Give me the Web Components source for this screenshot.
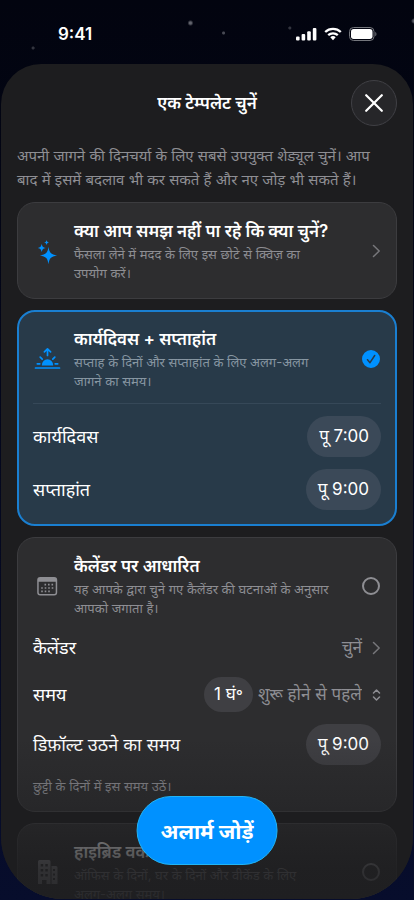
<!DOCTYPE html>
<html lang="hi">
<head>
<meta charset="utf-8">
<meta name="viewport" content="width=device-width, initial-scale=1">
<title>एक टेम्पलेट चुनें</title>
<style>
  html, body {
    margin: 0;
    height: 100%;
  }
  body {
    --blue: #0091ff;
    --sheet: #1d1d1f;
    --grey: #8e8e93;
    background: #02040f;
    color: #fff;
    font-family: Inter, "Noto Sans", "Noto Sans Devanagari", sans-serif;
  }
</style>
</head>
<body>
<alarm-app>
  <status-bar slot="status" time="9:41"></status-bar>
  <template-sheet heading="एक टेम्पलेट चुनें" action="अलार्म जोड़ें">
    <p slot="intro">अपनी जागने की दिनचर्या के लिए सबसे उपयुक्त शेड्यूल चुनें। आप बाद में इसमें बदलाव भी कर सकते हैं और नए जोड़ भी सकते हैं।</p>
    <quiz-card>
      <span slot="title">क्या आप समझ नहीं पा रहे कि क्या चुनें?</span>
      <span slot="text">फैसला लेने में मदद के लिए इस छोटे से क्विज़ का उपयोग करें।</span>
    </quiz-card>
    <template-card icon="sunrise" selected divided>
      <span slot="title">कार्यदिवस + सप्ताहांत</span>
      <span slot="text">सप्ताह के दिनों और सप्ताहांत के लिए अलग-अलग जागने का समय।</span>
      <time-row label="कार्यदिवस" value="पू 7:00"></time-row>
      <time-row label="सप्ताहांत" value="पू 9:00"></time-row>
    </template-card>
    <template-card icon="calendar">
      <span slot="title">कैलेंडर पर आधारित</span>
      <span slot="text">यह आपके द्वारा चुने गए कैलेंडर की घटनाओं के अनुसार आपको जगाता है।</span>
      <link-row label="कैलेंडर" value="चुनें"></link-row>
      <offset-row label="समय" value="1 घं॰" when="शुरू होने से पहले"></offset-row>
      <time-row label="डिफ़ॉल्ट उठने का समय" value="पू 9:00"></time-row>
      <card-note>छुट्टी के दिनों में इस समय उठें।</card-note>
    </template-card>
    <template-card icon="building">
      <span slot="title">हाइब्रिड वर्क</span>
      <span slot="text">ऑफिस के दिनों, घर के दिनों और वीकेंड के लिए अलग-अलग समय।</span>
    </template-card>
  </template-sheet>
</alarm-app>

<script>
const icons = {
  sparkles: `
    <svg width="28" height="28" viewBox="0 0 28 28" fill="#0091ff" aria-hidden="true">
      <path d="M15.500 9.800c.9 6 2.300 7.600 8.600 8.700-6.300 1.100-7.700 2.700-8.600 8.700-.9-6-2.300-7.600-8.600-8.700 6.300-1.100 7.700-2.700 8.600-8.700z"/>
      <path d="M8.700 6.700c.6 2.900 1.200 3.600 4.100 4.200-2.900.6-3.500 1.300-4.100 4.200-.6-2.900-1.200-3.600-4.100-4.200 2.900-.6 3.500-1.300 4.100-4.200z"/>
      <path d="M13.600 3c.4 1.800.8 2.200 2.600 2.600-1.800.4-2.200.8-2.600 2.600-.4-1.800-.8-2.200-2.600-2.600 1.800-.4 2.200-.8 2.600-2.600z"/>
    </svg>`,
  sunrise: `
    <svg width="28" height="28" viewBox="0 0 28 28" fill="none" stroke="#0091ff" stroke-width="1.700" stroke-linecap="round" stroke-linejoin="round" aria-hidden="true">
      <path d="M2.500 23h24M4.300 18.800h2.500M22.200 18.800h2.500M7.200 12.200l2 2M21.800 12.200l-2 2M14.500 10.500V4M11.400 6.800l3.100-3 3.100 3"/>
      <path d="M8.800 20.500a5.700 6.300 0 0 1 11.400 0z" fill="#0091ff" stroke="none"/>
    </svg>`,
  calendar: `
    <svg width="28" height="28" viewBox="0 0 28 28" fill="#8e8e93" aria-hidden="true">
      <path d="M7.200 5h14a3 3 0 0 1 3 3v12.600a3 3 0 0 1-3 3h-14a3 3 0 0 1-3-3V8a3 3 0 0 1 3-3zM5.700 9.800v10.700a1.600 1.600 0 0 0 1.600 1.600h13.800a1.600 1.600 0 0 0 1.600-1.600V9.800z" fill-rule="evenodd"/>
      <path d="M11.500 12.600h8.800M8.200 16h12.100M8.200 19.400h8.800" fill="none" stroke="#8e8e93" stroke-width="1.600" stroke-dasharray="1.600 1.900"/>
    </svg>`,
  building: `
    <svg width="28" height="28" viewBox="0 0 28 28" fill="#8e8e93" aria-hidden="true">
      <path fill-rule="evenodd" d="M6.500 2h9.500a1.500 1.500 0 0 1 1.500 1.500V26h-4v-4h-4.500v4H5V3.500A1.500 1.500 0 0 1 6.500 2zM7.700 6v2.500h2.500V6zM12.300 6v2.500h2.500V6zM7.700 11v2.500h2.500V11zM12.300 11v2.500h2.500V11zM7.700 16v2.500h2.500V16zM12.300 16v2.500h2.500V16z"/>
      <path fill-rule="evenodd" d="M18.500 8H23a1.500 1.500 0 0 1 1.500 1.500V26h-6zM20 11v2h2v-2zM20 15.500v2h2v-2zM20 20v2h2v-2z"/>
    </svg>`,
  chevron: `
    <svg class="chevron" width="9" height="14" viewBox="0 0 9 14" fill="none" stroke="#77777b" stroke-width="1.500" stroke-linecap="round" stroke-linejoin="round" aria-hidden="true">
      <path d="M1.500 1.500L7.200 7l-5.700 5.500"/>
    </svg>`
};

// styles of a card, shared by the quiz and the templates
const cardStyles = `
  :host {
    display: block;
    box-sizing: border-box;
    padding: 15px;
    border: 1px solid #3c3c3f;
    border-radius: 18px;
    background: #2d2d2f;
  }
  .head {
    display: grid;
    grid-template-columns: 28px minmax(0, 1fr) 20px;
    gap: 13px;
    align-items: center;
    cursor: pointer;
  }
  .head svg {
    display: block;
  }
  .head .chevron {
    justify-self: end;
  }
  .copy {
    padding-right: 18px;
  }
  .title, .text {
    display: block;
  }
  .title {
    font-size: 17px;
    line-height: 27px;
    font-weight: 600;
    white-space: nowrap;
  }
  .text {
    font-size: 13px;
    line-height: 19px;
    color: var(--text, #8e8e93);
  }
`;

const rowStyles = `
  :host {
    display: flex;
    align-items: center;
    justify-content: space-between;
    min-height: 35px;
    font-size: 17px;
    line-height: 25px;
  }
  label {
    font-size: 18px;
  }
  button {
    font: inherit;
    color: inherit;
    border: 0;
    cursor: pointer;
  }
  .pill {
    height: 41px;
    padding: 0 12px;
    border-radius: 21px;
    background: var(--pill, #3f3f43);
  }
`;

class BaseElement extends HTMLElement {
  constructor() {
    super();
    this.attachShadow({ mode: "open" });
  }
  connectedCallback() {
    this.shadowRoot.innerHTML = this.render();
  }
}

class AlarmApp extends BaseElement {
  render() {
    return `
      <style>
        :host {
          display: flex;
          flex-direction: column;
          height: 100vh;
          box-sizing: border-box;
          padding-bottom: 1px;
          background:
            radial-gradient(circle at 46% 23px, #62646d 1px, transparent 3px),
            radial-gradient(circle at 54% 33px, #484a54 1px, transparent 2px),
            radial-gradient(circle at 70% 28px, #33353f 1px, transparent 2px),
            radial-gradient(circle at 8% 48px, #33353f 1px, transparent 2px),
            radial-gradient(circle at 100% 21px, #555761 1px, transparent 3px),
            linear-gradient(#02040f, #03061a 40%, #070d2c);
        }
        ::slotted(template-sheet) {
          flex: 1;
          min-height: 0;
        }
      </style>
      <slot name="status"></slot>
      <slot></slot>
    `;
  }
}

class StatusBar extends BaseElement {
  render() {
    return `
      <style>
        :host {
          display: flex;
          align-items: center;
          justify-content: space-between;
          height: 64px;
          box-sizing: border-box;
          padding: 4px 37px 0 58px;
          font-size: 17px;
          font-weight: 600;
        }
        .signals {
          display: flex;
          align-items: center;
          gap: 7px;
        }
      </style>
      <span>${this.getAttribute("time")}</span>
      <div class="signals">
        <svg width="21" height="14" viewBox="0 0 21 14" fill="#fff">
          <rect x="0" y="9.500" width="3.600" height="4" rx="1.100"/>
          <rect x="5.600" y="7" width="3.600" height="6.500" rx="1.100"/>
          <rect x="11.200" y="4.200" width="3.600" height="9.300" rx="1.100"/>
          <rect x="16.800" y="1" width="3.600" height="12.500" rx="1.100"/>
        </svg>
        <svg width="18" height="14" viewBox="0 0 18 14" fill="none" stroke="#fff" stroke-width="2.300">
          <path d="M1.200 5a11.200 11.200 0 0 1 15.600 0M4.200 8.200a7 7 0 0 1 9.600 0"/>
          <path d="M6.300 10.300a4 4 0 0 1 5.400 0L9 13.200z" fill="#fff" stroke="none"/>
        </svg>
        <svg width="28" height="14" viewBox="0 0 28 14">
          <rect x=".5" y=".5" width="24.500" height="13" rx="4" fill="none" stroke="#74767c"/>
          <rect x="2" y="2" width="21.500" height="10" rx="2.700" fill="#fff"/>
          <path d="M26.300 4.700v4.600c1.500-.8 1.500-3.800 0-4.600z" fill="#74767c"/>
        </svg>
      </div>
    `;
  }
}

class TemplateSheet extends BaseElement {
  render() {
    return `
      <style>
        :host {
          display: block;
          position: relative;
          overflow: hidden;
          margin: 0 1px;
          border-radius: 40px 40px 62px 62px;
          background: var(--sheet);
        }
        .scroll {
          height: 100%;
          box-sizing: border-box;
          overflow: auto;
          scrollbar-width: none;
          padding: 16px 16px 120px;
        }
        header {
          display: grid;
          grid-template-columns: 46px 1fr 46px;
          align-items: center;
          margin-bottom: 18px;
        }
        h1 {
          grid-column: 2;
          margin: 0;
          font-size: 17px;
          line-height: 25px;
          font-weight: 600;
          text-align: center;
        }
        .close {
          display: grid;
          place-items: center;
          width: 46px;
          height: 46px;
          padding: 0;
          border: 1px solid #414146;
          border-radius: 50%;
          background: #262629;
        }
        ::slotted(p) {
          margin: 0 0 10px;
          padding-right: 10px;
          font-size: 15px;
          line-height: 24px;
          color: var(--grey);
        }
        .cards {
          display: grid;
          gap: 11px;
        }
        .fade {
          position: absolute;
          inset: auto 0 0;
          height: 160px;
          pointer-events: none;
          background: linear-gradient(#1d1d1f00, #1d1d1f59 42%, #1d1d1fa6 64%, #1d1d1fd4 82%, #1d1d1fe0);
        }
        .add {
          position: absolute;
          left: 50%;
          bottom: 34px;
          transform: translateX(-50%);
          height: 69px;
          padding: 0 23px;
          border: 1px solid #22b4f5;
          border-radius: 35px;
          background: var(--blue);
          color: #fff;
          font: inherit;
          font-size: 21px;
          font-weight: 700;
          white-space: nowrap;
        }
      </style>
      <div class="scroll">
        <header>
          <h1>${this.getAttribute("heading")}</h1>
          <button class="close" aria-label="बंद करें">
            <svg width="18" height="18" viewBox="0 0 18 18" stroke="#fff" stroke-width="2.200" stroke-linecap="round">
              <path d="M1.200 1.200l15.600 15.600M16.800 1.200L1.200 16.800"/>
            </svg>
          </button>
        </header>
        <slot name="intro"></slot>
        <div class="cards"><slot></slot></div>
      </div>
      <div class="fade"></div>
      <button class="add">${this.getAttribute("action")}</button>
    `;
  }
}

class QuizCard extends BaseElement {
  render() {
    return `
      <style>
        ${cardStyles}
        button.head {
          width: 100%;
          padding: 0;
          border: 0;
          background: none;
          color: inherit;
          font: inherit;
          text-align: left;
        }
      </style>
      <button class="head">
        ${icons.sparkles}
        <span class="copy">
          <span class="title"><slot name="title"></slot></span>
          <span class="text"><slot name="text"></slot></span>
        </span>
        ${icons.chevron}
      </button>
    `;
  }
}

class TemplateCard extends BaseElement {
  render() {
    return `
      <style>
        ${cardStyles}
        :host([selected]) {
          --text: #8796a2;
          --pill: #3b4958;
          padding: 14px;
          border: 2px solid #1a7fd1;
          background: #283a49;
        }
        .rows {
          display: grid;
          gap: 12px;
        }
        :host([icon="calendar"]) .rows,
        :host([divided]) .rows {
          margin-top: 12px;
        }
        :host([divided]) .rows {
          padding-top: 12px;
          border-top: 1px solid #364858;
        }
        input {
          appearance: none;
          box-sizing: border-box;
          width: 18px;
          height: 18px;
          margin: 0 1px;
          border: 2px solid var(--grey);
          border-radius: 50%;
        }
        .mark {
          display: grid;
        }
        .mark > * {
          grid-area: 1 / 1;
        }
        .mark svg {
          margin: 0 1px;
          visibility: hidden;
          pointer-events: none;
        }
        input:checked {
          border-color: var(--blue);
          background: var(--blue);
        }
        input:checked + svg {
          visibility: visible;
        }
      </style>
      <label class="head">
        ${icons[this.getAttribute("icon")]}
        <span class="copy">
          <span class="title"><slot name="title"></slot></span>
          <span class="text"><slot name="text"></slot></span>
        </span>
        <span class="mark">
          <input type="radio" name="template" ${this.hasAttribute("selected") ? "checked" : ""}>
          <svg width="18" height="18" viewBox="0 0 18 18" fill="none" stroke="#283a49" stroke-width="1.500" stroke-linecap="round" stroke-linejoin="round">
            <path d="M5.500 9.700l2.500 3 4.700-7.200"/>
          </svg>
        </span>
      </label>
      <div class="rows"><slot></slot></div>
    `;
  }
  connectedCallback() {
    super.connectedCallback();
    this.shadowRoot.querySelector("input").addEventListener("change", () => this.select());
  }
  // radios sit in separate shadow roots, so the group is kept in step here
  select() {
    document.querySelectorAll("template-card").forEach((card) => {
      card.toggleAttribute("selected", card === this);
      card.shadowRoot.querySelector("input").checked = card === this;
    });
  }
}

class TimeRow extends BaseElement {
  render() {
    return `
      <style>${rowStyles}</style>
      <label for="time">${this.getAttribute("label")}</label>
      <button class="pill" id="time">${this.getAttribute("value")}</button>
    `;
  }
}

class LinkRow extends BaseElement {
  render() {
    return `
      <style>
        ${rowStyles}
        button {
          display: flex;
          align-items: center;
          gap: 10px;
          padding: 0;
          background: none;
          color: var(--grey);
        }
      </style>
      <label for="link">${this.getAttribute("label")}</label>
      <button id="link">${this.getAttribute("value")} ${icons.chevron}</button>
    `;
  }
}

class OffsetRow extends BaseElement {
  render() {
    return `
      <style>
        ${rowStyles}
        .controls {
          display: flex;
          align-items: center;
          gap: 5px;
        }
        .pill {
          height: 35px;
          padding: 0 10px;
        }
        .choice {
          display: flex;
          align-items: center;
          gap: 10px;
        }
        select {
          appearance: none;
          height: 35px;
          padding: 0;
          border: 0;
          background: none;
          color: var(--grey);
          font: inherit;
        }
      </style>
      <label for="when">${this.getAttribute("label")}</label>
      <div class="controls">
        <button class="pill">${this.getAttribute("value")}</button>
        <div class="choice">
          <select id="when">
            <option>${this.getAttribute("when")}</option>
          </select>
          <svg width="9" height="12" viewBox="0 0 9 12" fill="none" stroke="#8e8e93" stroke-width="1.500" stroke-linecap="round" stroke-linejoin="round">
            <path d="M1.500 4l3-3 3 3M1.500 8l3 3 3-3"/>
          </svg>
        </div>
      </div>
    `;
  }
}

class CardNote extends BaseElement {
  render() {
    return `
      <style>
        :host {
          display: block;
          font-size: 13px;
          line-height: 19px;
          color: var(--grey);
        }
      </style>
      <slot></slot>
    `;
  }
}

customElements.define("alarm-app", AlarmApp);
customElements.define("status-bar", StatusBar);
customElements.define("template-sheet", TemplateSheet);
customElements.define("quiz-card", QuizCard);
customElements.define("template-card", TemplateCard);
customElements.define("time-row", TimeRow);
customElements.define("link-row", LinkRow);
customElements.define("offset-row", OffsetRow);
customElements.define("card-note", CardNote);
</script>
</body>
</html>
